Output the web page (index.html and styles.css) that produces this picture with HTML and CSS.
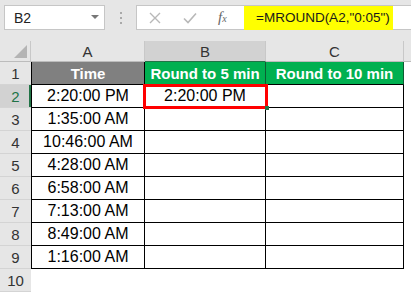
FILE: index.html
```html
<!DOCTYPE html>
<html>
<head>
<meta charset="utf-8">
<link rel="stylesheet" href="styles.css">
</head>
<body>
<div class="toolbar">
  <div class="namebox"><span class="name">B2</span><span class="caret"></span></div>
  <div class="dots"><i></i><i></i><i></i></div>
  <div class="fbox">
    <svg class="ic" width="16" height="12" viewBox="0 0 16 12"><path d="M3 1 L13 11 M13 1 L3 11" stroke="#b8b8b8" stroke-width="1.4" fill="none"/></svg>
    <svg class="ic ok" width="16" height="12" viewBox="0 0 16 12"><path d="M2 6.5 L6 10.5 L14 1.5" stroke="#b8b8b8" stroke-width="1.6" fill="none"/></svg>
    <span class="fx">f<span class="fxs">x</span></span>
    <div class="formula">=MROUND(A2,"0:05")</div>
  </div>
</div>
<div class="sheet">
  <div class="corner"><span class="tri"></span></div>
  <div class="ch">A</div>
  <div class="ch sel">B</div>
  <div class="ch">C</div>
  <div class="ch fill"></div>

  <div class="rh">1</div>
  <div class="c a hd gray">Time</div>
  <div class="c hd green">Round to 5 min</div>
  <div class="c hd green">Round to 10 min</div>
  <div class="f"></div>

  <div class="rh sel">2</div>
  <div class="c a">2:20:00 PM</div>
  <div class="c">2:20:00 PM</div>
  <div class="c"></div>
  <div class="f"></div>

  <div class="rh">3</div>
  <div class="c a">1:35:00 AM</div>
  <div class="c"></div>
  <div class="c"></div>
  <div class="f"></div>

  <div class="rh">4</div>
  <div class="c a">10:46:00 AM</div>
  <div class="c"></div>
  <div class="c"></div>
  <div class="f"></div>

  <div class="rh">5</div>
  <div class="c a">4:28:00 AM</div>
  <div class="c"></div>
  <div class="c"></div>
  <div class="f"></div>

  <div class="rh">6</div>
  <div class="c a">6:58:00 AM</div>
  <div class="c"></div>
  <div class="c"></div>
  <div class="f"></div>

  <div class="rh">7</div>
  <div class="c a">7:13:00 AM</div>
  <div class="c"></div>
  <div class="c"></div>
  <div class="f"></div>

  <div class="rh">8</div>
  <div class="c a">8:49:00 AM</div>
  <div class="c"></div>
  <div class="c"></div>
  <div class="f"></div>

  <div class="rh">9</div>
  <div class="c a">1:16:00 AM</div>
  <div class="c"></div>
  <div class="c"></div>
  <div class="f"></div>

  <div class="rh">10</div>
  <div class="e"></div>
  <div class="e"></div>
  <div class="e"></div>
  <div class="f"></div>

  <div class="redbox"></div>
  <div class="handle"></div>
</div>
</body>
</html>
```

FILE: styles.css
```css
html, body {
  margin: 0;
  padding: 0;
  background: #e6e6e6;
  overflow: hidden;
}
body {
  width: 411px;
  height: 292px;
  font-family: "Liberation Sans", Arial, sans-serif;
}
.toolbar {
  height: 41px;
  box-sizing: border-box;
  padding-top: 5px;
  display: flex;
  align-items: flex-start;
  background: #e6e6e6;
}
.namebox {
  margin-left: 4px;
  width: 101px;
  height: 25px;
  box-sizing: border-box;
  background: #fff;
  border: 1px solid #c6c6c6;
  display: flex;
  align-items: center;
  justify-content: space-between;
  padding: 0 5px 0 9px;
}
.name {
  font-size: 14px;
  color: #222;
}
.caret {
  width: 0;
  height: 0;
  border-left: 4px solid transparent;
  border-right: 4px solid transparent;
  border-top: 4px solid #777;
  margin-top: -2px;
}
.dots {
  width: 31px;
  height: 25px;
  display: flex;
  flex-direction: column;
  align-items: center;
  justify-content: center;
  gap: 3px;
}
.dots i {
  display: block;
  width: 2px;
  height: 2px;
  background: #a9a9a9;
}
.fbox {
  flex: 1;
  height: 25px;
  box-sizing: border-box;
  background: #fff;
  border: 1px solid #c6c6c6;
  border-right: none;
  display: flex;
  align-items: center;
  padding-left: 10px;
}
.ic {
  display: block;
}
.ok {
  margin-left: 19px;
}
.fx {
  margin-left: 20px;
  font-family: "Liberation Serif", serif;
  font-style: italic;
  font-size: 15px;
  color: #666;
  width: 20px;
}
.fxs {
  font-size: 10px;
}
.formula {
  margin-left: 6px;
  width: 149px;
  height: 24px;
  background: #ffff00;
  box-sizing: border-box;
  padding-left: 12px;
  font-size: 13.5px;
  line-height: 24px;
  color: #1a1a1a;
  white-space: nowrap;
}
.sheet {
  position: relative;
  display: grid;
  grid-template-columns: 31px 114px 121px 138px 7px;
  grid-template-rows: 21px repeat(10, 23px);
  background: #fff;
}
.corner {
  background: #e6e6e6;
  border-right: 1px solid #c8c8c8;
  border-bottom: 1px solid #bcbcbc;
  position: relative;
}
.tri {
  position: absolute;
  right: 3px;
  bottom: 3px;
  width: 0;
  height: 0;
  border-left: 13px solid transparent;
  border-bottom: 13px solid #b4b4b4;
}
.ch {
  background: #e6e6e6;
  border-right: 1px solid #c8c8c8;
  border-bottom: 1px solid #bcbcbc;
  font-size: 15px;
  color: #333;
  display: flex;
  align-items: center;
  justify-content: center;
}
.ch.sel {
  background: #d2d2d2;
  border-bottom: 1px solid #217346;
}
.ch.fill {
  border-right: none;
}
.rh {
  background: #e6e6e6;
  border-bottom: 1px solid #d4d4d4;
  font-size: 15px;
  color: #333;
  display: flex;
  align-items: center;
  justify-content: center;
  box-sizing: border-box;
}
.rh.sel {
  background: #d2d2d2;
  color: #217346;
  box-shadow: inset -2px 0 0 #217346;
}
.c {
  box-sizing: border-box;
  border-right: 1px solid #000;
  border-bottom: 1px solid #000;
  font-size: 16px;
  color: #000;
  display: flex;
  align-items: center;
  justify-content: center;
  white-space: nowrap;
}
.c.a {
  border-left: 1px solid #000;
}
.hd {
  color: #fff;
  font-weight: bold;
  font-size: 15px;
}
.gray {
  background: #808080;
}
.green {
  background: #00b050;
  border-right-color: #0d5c33;
}
.f, .e {
  background: #fff;
}
.redbox {
  position: absolute;
  left: 143px;
  top: 43px;
  width: 125px;
  height: 25px;
  box-sizing: border-box;
  border: 3px solid #ff0000;
}
.handle {
  position: absolute;
  left: 265px;
  top: 65px;
  width: 4px;
  height: 4px;
  background: #217346;
}
```
